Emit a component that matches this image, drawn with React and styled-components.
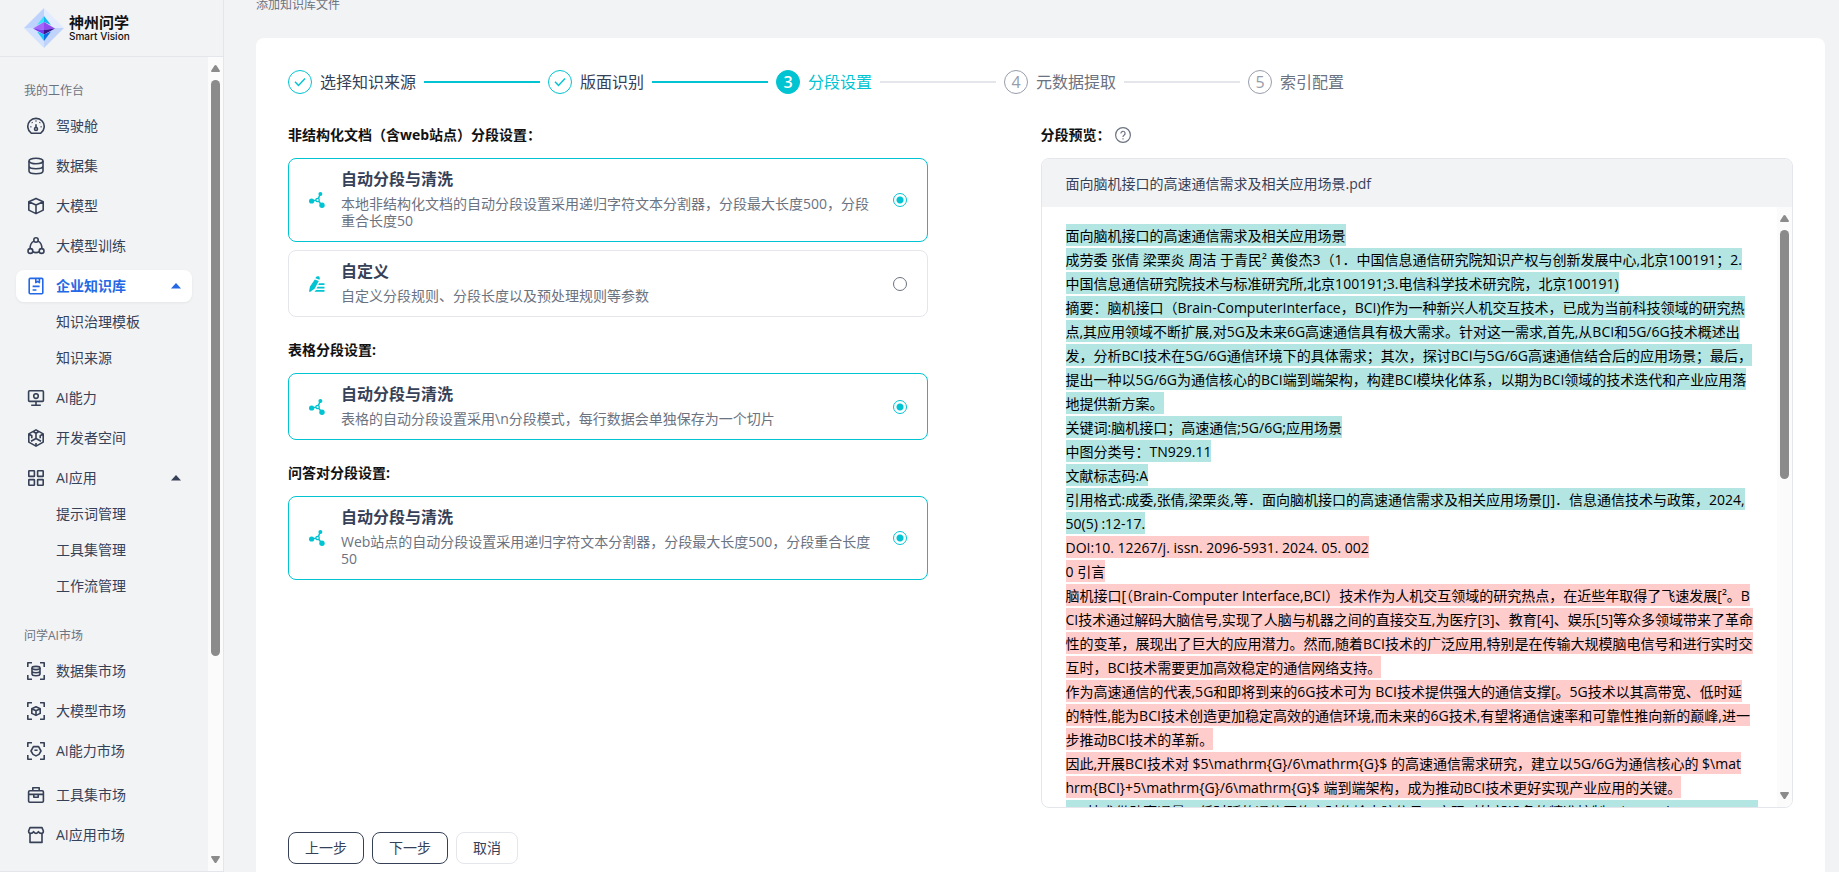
import React from "react";
import styled, { createGlobalStyle, css } from "styled-components";

const GlobalStyle = createGlobalStyle`
    * {
        box-sizing: border-box;
    }

    :root {
        --teal: #00c4d1;
        --ink: #364157;
        --muted: #6b7280;
        --line: #e5e6eb;
        --page: #f2f3f5;
        --blue: #2468e5;
    }

    body {
        margin: 0;
        overflow: hidden;
        background: var(--page);
        font-family: "Open Sans", "Noto Sans CJK SC", sans-serif;
        font-size: 14px;
        line-height: 22px;
        color: var(--ink);
    }
`

// Sidebar icons, all on an 18px grid
const ICONS = {
    gauge: (
        <>
            <path d="M4.2 16.2a8.2 8.2 0 1 1 9.6 0z" />
            <path d="M9 7.2v3.6M9 3.6v1M4.9 5.3l.6.6M13.1 5.3l-.6.6M3.4 9.8h1M13.6 9.8h1" />
            <circle cx="9" cy="12" r="1.5" />
        </>
    ),
    database: (
        <>
            <ellipse cx="9" cy="4" rx="7" ry="2.7" />
            <path d="M2 4v10c0 1.5 3.1 2.7 7 2.7s7-1.2 7-2.7V4M2 9c0 1.5 3.1 2.7 7 2.7s7-1.2 7-2.7" />
        </>
    ),
    cube: <path d="M9 1.4l7.2 3.3v8.4L9 16.6l-7.2-3.5V4.7zM1.8 4.7L9 8l7.2-3.3M9 8v8.6" />,
    nodes: (
        <>
            <circle cx="9" cy="3" r="2.2" />
            <circle cx="3.4" cy="14" r="2.4" />
            <circle cx="14.6" cy="14" r="2.4" />
            <path d="M7 4.1C4.4 5.4 3 8.2 3.1 11.6M11 4.1c2.6 1.3 4 4.1 3.9 7.5M5.8 14.8c2 1 4.4 1 6.4 0" />
        </>
    ),
    book: (
        <>
            <rect x="2.2" y="1.4" width="13.6" height="15.4" rx="1" />
            <path d="M8.8 1.6v4l1.800-1.200 1.800 1.200v-4M5.600 9.400h7M5.600 13h3.800" />
        </>
    ),
    monitor: (
        <>
            <rect x="1.6" y="1.8" width="14.8" height="10.6" rx="1" />
            <circle cx="9" cy="7.1" r="2.3" />
            <path d="M9 4v1M9 12.6v3.4M4.200 16.200h9.600" />
        </>
    ),
    hexagon: (
        <path d="M9 .9l7.200 4v8.200L9 17.100l-7.200-4V4.900zM9 4.200v5.300l-5 2.800M9 9.500l5 2.800M9 14v3M2.200 5.200l2.600 1.500v2.500M15.800 5.200l-2.600 1.500v2.500M6.500 2.700L9 4.200l2.500-1.500" />
    ),
    grid: (
        <>
            <rect x="1.8" y="1.8" width="5.6" height="5.6" rx=".5" />
            <rect x="10.6" y="1.8" width="5.6" height="5.6" rx=".5" />
            <rect x="1.8" y="10.6" width="5.6" height="5.6" rx=".5" />
            <rect x="10.6" y="10.6" width="5.6" height="5.6" rx=".5" />
        </>
    ),
    scanData: (
        <>
            <path d="M.8 5V.8H5M13 .8h4.200V5M17.200 13v4.200H13M5 17.200H.8V13" />
            <ellipse cx="9" cy="6" rx="4" ry="1.6" />
            <path d="M5 6v6c0 1 1.800 1.700 4 1.700s4-.7 4-1.700V6M5 9c0 1 1.800 1.700 4 1.700S13 10 13 9" />
        </>
    ),
    scanCube: (
        <>
            <path d="M.8 5V.8H5M13 .8h4.200V5M17.200 13v4.200H13M5 17.200H.8V13" />
            <path d="M9 4.800l4.200 2v4.600L9 13.400l-4.200-2V6.800zM4.800 6.800L9 8.800l4.200-2M9 8.800v4.600" />
        </>
    ),
    scanAi: (
        <>
            <path d="M.8 5V.8H5M13 .8h4.200V5M17.200 13v4.200H13M5 17.200H.8V13" />
            <path d="M6.400 4.600h5.200L14 9l-2 3.400L9 13.900l-3-1.500L4 9zM7.400 8.200h3.200" />
        </>
    ),
    toolbox: (
        <>
            <rect x="1.6" y="4.8" width="14.8" height="11.4" rx="1.2" />
            <path d="M5.800 4.600V1.800h6.400v2.800M1.800 8.400h14.400M6.800 8.400v2.800h4.400V8.400" />
        </>
    ),
    shop: (
        <>
            <path d="M3 1.600h12l1.400 3.400c0 1.600-1 2.400-2.100 2.400S12 6.600 11.400 5.600C11 6.800 10 7.400 9 7.400s-2-.6-2.400-1.800C6 6.600 4.800 7.400 3.700 7.400S1.600 6.600 1.600 5z" />
            <path d="M3 7.800v8.600h12V7.800" />
        </>
    ),
}

const WORKBENCH = [
    { icon: "gauge", label: "驾驶舱" },
    { icon: "database", label: "数据集" },
    { icon: "cube", label: "大模型" },
    { icon: "nodes", label: "大模型训练" },
    { icon: "book", label: "企业知识库", active: true, children: ["知识治理模板", "知识来源"] },
    { icon: "monitor", label: "AI能力" },
    { icon: "hexagon", label: "开发者空间" },
    { icon: "grid", label: "AI应用", children: ["提示词管理", "工具集管理", "工作流管理"] },
]

const MARKET = [
    { icon: "scanData", label: "数据集市场" },
    { icon: "scanCube", label: "大模型市场" },
    { icon: "scanAi", label: "AI能力市场" },
]

const MARKET_TOOLS = [
    { icon: "toolbox", label: "工具集市场" },
    { icon: "shop", label: "AI应用市场" },
]

const STEPS = [
    { label: "选择知识来源", state: "done" },
    { label: "版面识别", state: "done" },
    { label: "分段设置", state: "current" },
    { label: "元数据提取", state: "todo" },
    { label: "索引配置", state: "todo" },
]

const SECTIONS = [
    {
        name: "doc",
        title: "非结构化文档（含web站点）分段设置：",
        options: [
            { icon: "auto", title: "自动分段与清洗", text: "本地非结构化文档的自动分段设置采用递归字符文本分割器，分段最大长度500，分段重合长度50", checked: true },
            { icon: "custom", title: "自定义", text: "自定义分段规则、分段长度以及预处理规则等参数" },
        ],
    },
    {
        name: "table",
        title: "表格分段设置:",
        options: [
            { icon: "auto", title: "自动分段与清洗", text: "表格的自动分段设置采用\\n分段模式，每行数据会单独保存为一个切片", checked: true },
        ],
    },
    {
        name: "qa",
        title: "问答对分段设置:",
        options: [
            { icon: "auto", title: "自动分段与清洗", text: "Web站点的自动分段设置采用递归字符文本分割器，分段最大长度500，分段重合长度50", checked: true },
        ],
    },
]

const CHUNKS = [
    {
        tone: "#b3e5e3",
        lines: [
            "面向脑机接口的高速通信需求及相关应用场景",
            "成劳委 张倩 梁栗炎 周洁 于青民² 黄俊杰3（1．中国信息通信研究院知识产权与创新发展中心,北京100191；2.",
            "中国信息通信研究院技术与标准研究所,北京100191;3.电信科学技术研究院，北京100191)",
            "摘要：脑机接口（Brain-ComputerInterface，BCI)作为一种新兴人机交互技术，已成为当前科技领域的研究热",
            "点,其应用领域不断扩展,对5G及未来6G高速通信具有极大需求。针对这一需求,首先,从BCI和5G/6G技术概述出",
            "发，分析BCI技术在5G/6G通信环境下的具体需求；其次，探讨BCI与5G/6G高速通信结合后的应用场景；最后，",
            "提出一种以5G/6G为通信核心的BCI端到端架构，构建BCI模块化体系，以期为BCI领域的技术迭代和产业应用落",
            "地提供新方案。",
            "关键词:脑机接口；高速通信;5G/6G;应用场景",
            "中图分类号：TN929.11",
            "文献标志码:A",
            "引用格式:成委,张倩,梁栗炎,等．面向脑机接口的高速通信需求及相关应用场景[J]．信息通信技术与政策，2024,",
            "50(5) :12-17.",
        ],
    },
    {
        tone: "#ffcccc",
        lines: [
            "DOI:10. 12267/j. issn. 2096-5931. 2024. 05. 002",
            "0 引言",
            "脑机接口[（Brain-Computer Interface,BCI）技术作为人机交互领域的研究热点，在近些年取得了飞速发展[²。B",
            "CI技术通过解码大脑信号,实现了人脑与机器之间的直接交互,为医疗[3]、教育[4]、娱乐[5]等众多领域带来了革命",
            "性的变革，展现出了巨大的应用潜力。然而,随着BCI技术的广泛应用,特别是在传输大规模脑电信号和进行实时交",
            "互时，BCI技术需要更加高效稳定的通信网络支持。",
            "作为高速通信的代表,5G和即将到来的6G技术可为 BCI技术提供强大的通信支撑[。5G技术以其高带宽、低时延",
            "的特性,能为BCI技术创造更加稳定高效的通信环境,而未来的6G技术,有望将通信速率和可靠性推向新的巅峰,进一",
            "步推动BCI技术的革新。",
            "因此,开展BCI技术对 $5\\mathrm{G}/6\\mathrm{G}$ 的高速通信需求研究，建立以5G/6G为通信核心的 $\\mat",
            "hrm{BCI}+5\\mathrm{G}/6\\mathrm{G}$ 端到端架构，成为推动BCI技术更好实现产业应用的关键。",
        ],
    },
    {
        tone: "#b3e5e3",
        lines: [
            "BCI技术借助高通量、低时延的通信网络实时传输大脑信号，实现对外部设备的精准控制。$5\\mathrm{G}/6\\mat",
        ],
    },
]

function MenuIcon({ name }) {
    return (
        <IconSvg viewBox="0 0 18 18" aria-hidden="true">{ICONS[name]}</IconSvg>
    )
}

function Menu({ items }) {
    return (
        <MenuList>
            {items.map((item) => (
                <li key={item.label}>
                    <MenuLink href="#" $active={item.active}>
                        <MenuIcon name={item.icon} />
                        {item.label}
                        {item.children && <Caret viewBox="0 0 10 6" aria-hidden="true"><path d="M5 0l5 5.500H0z" /></Caret>}
                    </MenuLink>
                    {item.children && (
                        <SubList>
                            {item.children.map((child) => (
                                <li key={child}><SubLink href="#">{child}</SubLink></li>
                            ))}
                        </SubList>
                    )}
                </li>
            ))}
        </MenuList>
    )
}

function ScrollBar({ size }) {
    return (
        <Track aria-hidden="true">
            <Arrow viewBox="0 0 9 7"><path d="M3.500 .6q1-1.200 2 0L9 6q0 1-1 1H1Q0 7 0 6z" /></Arrow>
            <Rail><Thumb $size={size} /></Rail>
            <Arrow viewBox="0 0 9 7"><path d="M3.500 6.400q1 1.200 2 0L9 1q0-1-1-1H1Q0 0 0 1z" /></Arrow>
        </Track>
    )
}

function Logo() {
    return (
        <LogoSvg viewBox="0 0 40 40" aria-hidden="true">
            <path d="M20 0L0 20h20z" fill="#bdd3fd" />
            <path d="M20 0l20 20H20z" fill="#e3ecfe" />
            <path d="M0 20l20 20V20z" fill="#d3e2fe" />
            <path d="M40 20L20 40V20z" fill="#c0d4fb" />
            <path d="M20 8l-7 9 7-3z" fill="#35e4f8" />
            <path d="M20 8l7 9-7-3z" fill="#18b4f2" />
            <path d="M20 14L9 20.500l11 1.500z" fill="#a566fa" />
            <path d="M20 14l11 6.500L20 22z" fill="#8f4bf0" />
            <path d="M9 20.500L20 22v4.500z" fill="#7a3cf0" />
            <path d="M31 20.500L20 22v4.500z" fill="#38158f" />
            <path d="M13 23.500L20 33v-6.500z" fill="#22c8f8" />
            <path d="M27 23.500L20 33v-6.500z" fill="#0a6fe8" />
        </LogoSvg>
    )
}

function OptionIcon({ name }) {
    if (name === "custom") {
        return (
            <OptionSvg viewBox="0 0 16 16" aria-hidden="true">
                <path d="M5.800 3.400L9.800 5 5.600 12.800 1 16 0 15.600 1 10.500zM6.400 2.200C6.900.4 8.300-.2 9.500.3s1.700 1.900.9 3.500z" />
                <path d="M10 7.300h5.500V9H9.200zM8.500 10.700h7v1.700H7.600zM7 14h8.500v1.700H5.500z" />
            </OptionSvg>
        )
    }
    return (
        <OptionSvg viewBox="0 0 16 16" aria-hidden="true">
            <circle cx="11.4" cy="2" r="2" />
            <circle cx="2.6" cy="9" r="2.6" />
            <circle cx="13" cy="13.2" r="2.700" />
            <circle cx="8.600" cy="8" r="1.700" fill="none" stroke="currentColor" strokeWidth="1.300" />
            <path d="M11.300 2L9.300 6.600M2.600 9l4.300-.7M9.600 9.300l3 3.500" stroke="currentColor" strokeWidth="1.500" />
        </OptionSvg>
    )
}

export default function App() {
    return (
        <Layout>
            <GlobalStyle />
            <Sidebar>
                <Brand href="#">
                    <Logo />
                    <BrandText>
                        <BrandName>神州问学</BrandName>
                        <BrandLatin>Smart Vision</BrandLatin>
                    </BrandText>
                </Brand>
                <SidebarBody>
                    <Nav>
                        <NavTitle>我的工作台</NavTitle>
                        <Menu items={WORKBENCH} />
                        <NavTitle>问学AI市场</NavTitle>
                        <Menu items={MARKET} />
                        <Menu items={MARKET_TOOLS} />
                    </Nav>
                    <ScrollBar size="75%" />
                </SidebarBody>
            </Sidebar>

            <Main>
                <Breadcrumb>添加知识库文件</Breadcrumb>
                <Card>
                    <Steps>
                        {STEPS.map((step, i) => (
                            <React.Fragment key={step.label}>
                                {i > 0 && <StepLine $done={STEPS[i - 1].state === "done"} />}
                                <Step $state={step.state}>
                                    <StepDot $state={step.state}>
                                        {step.state === "done"
                                            ? <Tick viewBox="0 0 12 10" aria-label="已完成"><path d="M1 4.800l3.500 3.600L11 1.600" /></Tick>
                                            : i + 1}
                                    </StepDot>
                                    {step.label}
                                </Step>
                            </React.Fragment>
                        ))}
                    </Steps>

                    <Columns>
                        <Settings>
                            {SECTIONS.map((section) => (
                                <Section key={section.name}>
                                    <SectionTitle>{section.title}</SectionTitle>
                                    <Options>
                                        {section.options.map((option) => (
                                            <Option key={option.title} $checked={option.checked}>
                                                <OptionIcon name={option.icon} />
                                                <OptionBody>
                                                    <OptionTitle>{option.title}</OptionTitle>
                                                    <OptionText>{option.text}</OptionText>
                                                </OptionBody>
                                                <Radio type="radio" name={section.name} defaultChecked={option.checked} />
                                            </Option>
                                        ))}
                                    </Options>
                                </Section>
                            ))}
                        </Settings>

                        <section>
                            <SectionTitle>
                                分段预览：
                                <Help viewBox="0 0 16 16" aria-hidden="true">
                                    <circle cx="8" cy="8" r="7.400" />
                                    <path d="M5.900 6.400a2.100 2.100 0 1 1 3.100 1.800c-.7.400-1 .8-1 1.500v.3M8 11.200v1.300" />
                                </Help>
                            </SectionTitle>
                            <Preview>
                                <PreviewHeader>面向脑机接口的高速通信需求及相关应用场景.pdf</PreviewHeader>
                                <PreviewBody>
                                    <PreviewText>
                                        {CHUNKS.map((chunk, i) => (
                                            <Chunk key={i} $tone={chunk.tone}>
                                                {chunk.lines.map((line) => (
                                                    <p key={line}><mark>{line}</mark></p>
                                                ))}
                                            </Chunk>
                                        ))}
                                    </PreviewText>
                                    <ScrollBar size="45%" />
                                </PreviewBody>
                            </Preview>
                        </section>
                    </Columns>

                    <Actions>
                        <Button type="button" $strong>上一步</Button>
                        <Button type="button" $strong>下一步</Button>
                        <Button type="button">取消</Button>
                    </Actions>
                </Card>
            </Main>
        </Layout>
    )
}

const Layout = styled.div`
    display: flex;
    height: 100vh;
    overflow: hidden;
`

const Sidebar = styled.aside`
    display: flex;
    flex-direction: column;
    flex: none;

    width: 224px;
    border: solid var(--line);
    border-width: 0 1px 1px 0;
`

const Brand = styled.a`
    display: flex;
    align-items: center;
    gap: 5px;
    flex: none;

    height: 57px;
    padding: 0 24px;
    border-bottom: 1px solid var(--line);

    color: #111;
    text-decoration: none;
`

const LogoSvg = styled.svg`
    width: 40px;
    height: 40px;
`

const BrandText = styled.div`
    display: flex;
    flex-direction: column;
`

const BrandName = styled.span`
    font-size: 15px;
    font-weight: bold;
    line-height: 16px;
`

const BrandLatin = styled.span`
    font-family: Inter, sans-serif;
    font-size: 10px;
    font-weight: 500;
    line-height: 12px;
    white-space: nowrap;
`

const SidebarBody = styled.div`
    display: flex;
    flex: 1;
    min-height: 0;
`

const Nav = styled.nav`
    flex: 1;
    overflow: hidden;
    padding: 0 16px;
`

const NavTitle = styled.h2`
    margin: 24px 8px 9px;

    font-size: 12px;
    font-weight: normal;
    line-height: 20px;
    color: var(--muted);
`

const MenuList = styled.ul`
    display: flex;
    flex-direction: column;
    gap: 8px;

    margin: 0;
    padding: 0;
    list-style: none;

    & + & {
        margin-top: 12px;
    }
`

const MenuLink = styled.a`
    display: flex;
    align-items: center;
    gap: 11px;

    height: 32px;
    padding: 0 11px;
    border-radius: 8px;

    color: var(--ink);
    text-decoration: none;

    ${(p) => p.$active && css`
        background: #fff;
        box-shadow: 0 1px 3px rgba(0, 0, 0, 0.06);
        color: var(--blue);
        font-weight: bold;
    `}
`

const IconSvg = styled.svg`
    width: 18px;
    height: 18px;
    fill: none;
    stroke: currentColor;
    stroke-width: 1.6;
    stroke-linejoin: round;
`

const Caret = styled.svg`
    width: 10px;
    height: 6px;
    margin-left: auto;
    fill: currentColor;
`

const SubList = styled.ul`
    display: flex;
    flex-direction: column;
    gap: 4px;

    margin: 4px 0 0;
    padding: 0 0 0 40px;
    list-style: none;
`

const SubLink = styled.a`
    display: block;
    line-height: 32px;
    color: var(--ink);
    text-decoration: none;
`

const Track = styled.div`
    display: flex;
    flex-direction: column;
    align-items: center;
    flex: none;

    width: 15px;
    padding: 8px 0;
    background: #fbfbfb;
`

const Arrow = styled.svg`
    flex: none;
    width: 9px;
    height: 7px;
    fill: #8b8b8b;
`

const Rail = styled.div`
    flex: 1;
    width: 9px;
    padding: 8px 0;
`

const Thumb = styled.div`
    height: ${(p) => p.$size};
    border-radius: 5px;
    background: #8b8b8b;
`

const Main = styled.main`
    display: flex;
    flex-direction: column;
    flex: 1;
    min-width: 0;
    padding: 0 14px 0 32px;
`

const Breadcrumb = styled.div`
    margin-bottom: 28px;
    font-size: 12px;
    line-height: 10px;
    color: var(--muted);
`

const Card = styled.div`
    flex: 1;
    padding: 32px;
    border-radius: 8px 8px 0 0;
    background: #fff;
`

const Steps = styled.div`
    display: flex;
    align-items: center;
    gap: 8px;

    max-width: 1056px;
    margin-bottom: 30px;
`

const StepLine = styled.div`
    flex: 1;
    height: 2px;
    background: ${(p) => (p.$done ? "var(--teal)" : "var(--line)")};
`

const STEP_COLORS = { done: "var(--ink)", current: "var(--teal)", todo: "var(--muted)" }

const Step = styled.div`
    display: flex;
    align-items: center;
    gap: 8px;

    font-size: 16px;
    line-height: 24px;
    white-space: nowrap;
    color: ${(p) => STEP_COLORS[p.$state]};
`

const StepDot = styled.span`
    display: flex;
    align-items: center;
    justify-content: center;

    width: 24px;
    height: 24px;
    border: 1px solid ${(p) => (p.$state === "todo" ? "#989daa" : "var(--teal)")};
    border-radius: 50%;
    background: ${(p) => (p.$state === "current" ? "var(--teal)" : "#fff")};

    color: ${(p) => (p.$state === "current" ? "#fff" : "#989daa")};
    font-weight: ${(p) => (p.$state === "current" ? 600 : 400)};
`

const Tick = styled.svg`
    width: 12px;
    height: 10px;
    fill: none;
    stroke: var(--teal);
    stroke-width: 1.4;
`

const Columns = styled.div`
    display: grid;
    grid-template-columns: minmax(0, 1fr) minmax(0, 1fr);
`

const Settings = styled.div`
    display: flex;
    flex-direction: column;
    gap: 22px;
    width: 85%;
`

const Section = styled.section`
    display: flex;
    flex-direction: column;
`

const SectionTitle = styled.h3`
    display: flex;
    align-items: center;

    margin: 0 0 12px;
    font-size: 14px;
    font-weight: bold;
    line-height: 22px;
    color: #111;
`

const Help = styled.svg`
    width: 16px;
    height: 16px;
    margin-left: 4px;
    fill: none;
    stroke: var(--muted);
    stroke-width: 1.2;
`

const Options = styled.div`
    display: flex;
    flex-direction: column;
    gap: 8px;
`

const Option = styled.label`
    display: flex;
    align-items: center;
    gap: 16px;

    padding: 12px 20px;
    border: 1px solid ${(p) => (p.$checked ? "var(--teal)" : "var(--line)")};
    border-radius: 8px;
`

const OptionSvg = styled.svg`
    flex: none;
    width: 16px;
    height: 16px;
    color: var(--teal);
    fill: currentColor;
`

const OptionBody = styled.span`
    display: flex;
    flex-direction: column;
    flex: 1;
    gap: 8px;
`

const OptionTitle = styled.span`
    font-size: 16px;
    font-weight: bold;
    line-height: 16px;
`

const OptionText = styled.span`
    line-height: 17px;
    color: var(--muted);
`

const Radio = styled.input`
    appearance: none;
    flex: none;
    width: 14px;
    height: 14px;
    margin: 0;
    border: 1px solid var(--muted);
    border-radius: 50%;

    &:checked {
        border-color: var(--teal);
        background: radial-gradient(circle, var(--teal) 3px, transparent 4px);
    }
`

const Preview = styled.div`
    display: flex;
    flex-direction: column;

    height: calc(100vh - 222px);
    border: 1px solid var(--line);
    border-radius: 8px;
    overflow: hidden;
`

const PreviewHeader = styled.div`
    flex: none;
    padding: 1px 24px 0;
    line-height: 47px;
    background: var(--page);
`

const PreviewBody = styled.div`
    display: flex;
    flex: 1;
    min-height: 0;
`

const PreviewText = styled.div`
    flex: 1;
    min-width: 0;
    padding: 17px 0 0 24px;
    overflow: hidden;
`

const Chunk = styled.div`
    line-height: 24px;
    white-space: nowrap;

    p {
        margin: 0;
    }

    mark {
        padding: 2px 0 1px;
        background: ${(p) => p.$tone};
        color: #000;
    }
`

const Actions = styled.div`
    display: flex;
    gap: 8px;
    margin-top: 24px;
`

const Button = styled.button`
    height: 32px;
    padding: 0 16px;
    border: 1px solid ${(p) => (p.$strong ? "var(--ink)" : "var(--line)")};
    border-radius: 8px;
    background: #fff;

    font: inherit;
    color: var(--ink);
`
